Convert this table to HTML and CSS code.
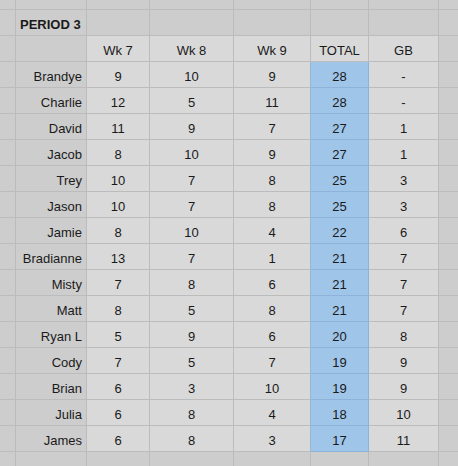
FILE: index.html
```html
<!DOCTYPE html>
<html>
<head>
<meta charset="utf-8">
<link rel="stylesheet" href="styles.css">
</head>
<body>
<div class="sheet">
  <div class="c"></div><div class="c"></div><div class="c"></div><div class="c"></div><div class="c"></div><div class="c"></div><div class="c"></div><div class="c"></div>
  <div class="c"></div><div class="c ttl">PERIOD 3</div><div class="c"></div><div class="c"></div><div class="c"></div><div class="c"></div><div class="c"></div><div class="c"></div>
  <div class="c"></div><div class="c"></div><div class="c lt">Wk 7</div><div class="c lt">Wk 8</div><div class="c lt">Wk 9</div><div class="c lt">TOTAL</div><div class="c lt">GB</div><div class="c"></div>

  <div class="c"></div><div class="c nm">Brandye</div><div class="c lt">9</div><div class="c lt">10</div><div class="c lt pre">9</div><div class="c bl">28</div><div class="c lt">-</div><div class="c"></div>
  <div class="c"></div><div class="c nm">Charlie</div><div class="c lt">12</div><div class="c lt">5</div><div class="c lt pre">11</div><div class="c bl">28</div><div class="c lt">-</div><div class="c"></div>
  <div class="c"></div><div class="c nm">David</div><div class="c lt">11</div><div class="c lt">9</div><div class="c lt pre">7</div><div class="c bl">27</div><div class="c lt">1</div><div class="c"></div>
  <div class="c"></div><div class="c nm">Jacob</div><div class="c lt">8</div><div class="c lt">10</div><div class="c lt pre">9</div><div class="c bl">27</div><div class="c lt">1</div><div class="c"></div>
  <div class="c"></div><div class="c nm">Trey</div><div class="c lt">10</div><div class="c lt">7</div><div class="c lt pre">8</div><div class="c bl">25</div><div class="c lt">3</div><div class="c"></div>
  <div class="c"></div><div class="c nm">Jason</div><div class="c lt">10</div><div class="c lt">7</div><div class="c lt pre">8</div><div class="c bl">25</div><div class="c lt">3</div><div class="c"></div>
  <div class="c"></div><div class="c nm">Jamie</div><div class="c lt">8</div><div class="c lt">10</div><div class="c lt pre">4</div><div class="c bl">22</div><div class="c lt">6</div><div class="c"></div>
  <div class="c"></div><div class="c nm">Bradianne</div><div class="c lt">13</div><div class="c lt">7</div><div class="c lt pre">1</div><div class="c bl">21</div><div class="c lt">7</div><div class="c"></div>
  <div class="c"></div><div class="c nm">Misty</div><div class="c lt">7</div><div class="c lt">8</div><div class="c lt pre">6</div><div class="c bl">21</div><div class="c lt">7</div><div class="c"></div>
  <div class="c"></div><div class="c nm">Matt</div><div class="c lt">8</div><div class="c lt">5</div><div class="c lt pre">8</div><div class="c bl">21</div><div class="c lt">7</div><div class="c"></div>
  <div class="c"></div><div class="c nm">Ryan L</div><div class="c lt">5</div><div class="c lt">9</div><div class="c lt pre">6</div><div class="c bl">20</div><div class="c lt">8</div><div class="c"></div>
  <div class="c"></div><div class="c nm">Cody</div><div class="c lt">7</div><div class="c lt">5</div><div class="c lt pre">7</div><div class="c bl">19</div><div class="c lt">9</div><div class="c"></div>
  <div class="c"></div><div class="c nm">Brian</div><div class="c lt">6</div><div class="c lt">3</div><div class="c lt pre">10</div><div class="c bl">19</div><div class="c lt">9</div><div class="c"></div>
  <div class="c"></div><div class="c nm">Julia</div><div class="c lt">6</div><div class="c lt">8</div><div class="c lt pre">4</div><div class="c bl">18</div><div class="c lt">10</div><div class="c"></div>
  <div class="c"></div><div class="c nm">James</div><div class="c lt">6</div><div class="c lt">8</div><div class="c lt pre">3</div><div class="c bl">17</div><div class="c lt">11</div><div class="c"></div>

  <div class="c"></div><div class="c"></div><div class="c"></div><div class="c"></div><div class="c"></div><div class="c"></div><div class="c"></div><div class="c"></div>
</div>
</body>
</html>
```
FILE: styles.css
```css
html, body {
  margin: 0;
  padding: 0;
  width: 458px;
  height: 466px;
  overflow: hidden;
  background: #cdcdcd;
}

.sheet {
  display: grid;
  grid-template-columns: 16px 71px 63px 84px 77px 58px 70px 30px;
  grid-template-rows: 10px repeat(17, 26px) 20px;
  font-family: "Liberation Sans", Arial, sans-serif;
  font-size: 13px;
  color: #1a1a1a;
}

.c {
  box-sizing: border-box;
  border-right: 1px solid #bcbcbc;
  border-bottom: 1px solid #bcbcbc;
  background: #cdcdcd;
  display: flex;
  align-items: center;
  justify-content: center;
  padding-top: 3px;
  white-space: nowrap;
}

.lt {
  background: #d9d9d9;
}

.bl {
  background: #9fc5e8;
  border-bottom-color: #8db3d8;
  border-right-color: #8db3d8;
}

.pre {
  border-right-color: #9ab6cf;
}

.nm {
  justify-content: flex-end;
  padding-right: 4px;
}

.ttl {
  justify-content: flex-start;
  padding-left: 4px;
  font-weight: bold;
}
```
